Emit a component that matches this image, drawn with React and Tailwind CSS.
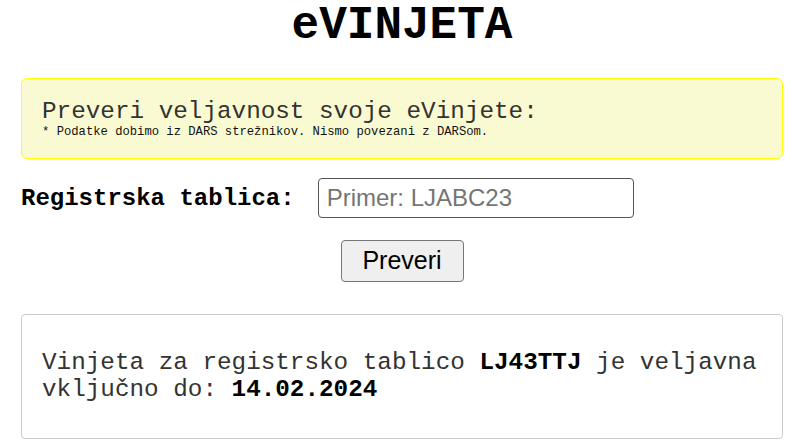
export default function App() {
  return (
    <div className="w-[800px] h-[445px] bg-white overflow-hidden font-['Liberation_Mono',monospace]">
      <div className="ml-[21px] w-[762px]">
        <h1 className="text-center text-[46px] leading-[52px] font-bold text-black">eVINJETA</h1>
        <div className="mt-[26px] rounded-[6px] border border-[#ffff00] bg-[#fafad2] px-[20px] pt-[19px] pb-[19px]">
          <div className="text-[24.3px] leading-[27px] text-[#333333]">Preveri veljavnost svoje eVinjete:</div>
          <div className="text-[12.2px] leading-[14px] text-[#111111]">* Podatke dobimo iz DARS strežnikov. Nismo povezani z DARSom.</div>
        </div>
        <div className="mt-[19px] flex items-center">
          <label className="text-[24px] leading-[normal] font-bold text-black">Registrska tablica:</label>
          <input
            type="text"
            placeholder="Primer: LJABC23"
            className="ml-[23px] w-[316px] h-[40px] rounded-[4px] border border-[#555555] px-[8px] text-[24px] font-['Liberation_Sans',Arial,sans-serif] text-black placeholder:text-[#757575] outline-none"
          />
        </div>
        <div className="mt-[22px] flex justify-center">
          <button className="w-[123px] h-[42px] rounded-[4px] border border-[#767676] bg-[#efefef] text-[25px] font-['Liberation_Sans',Arial,sans-serif] text-black">
            Preveri
          </button>
        </div>
        <div className="mt-[32px] rounded-[4px] border border-[#cccccc] px-[20px] pt-[34px] pb-[35px] text-[24.3px] leading-[27px] text-[#333333]">
          <p>
            Vinjeta za registrsko tablico <b className="text-black">LJ43TTJ</b> je veljavna
          </p>
          <p>
            vključno do: <b className="text-black">14.02.2024</b>
          </p>
        </div>
      </div>
    </div>
  );
}
